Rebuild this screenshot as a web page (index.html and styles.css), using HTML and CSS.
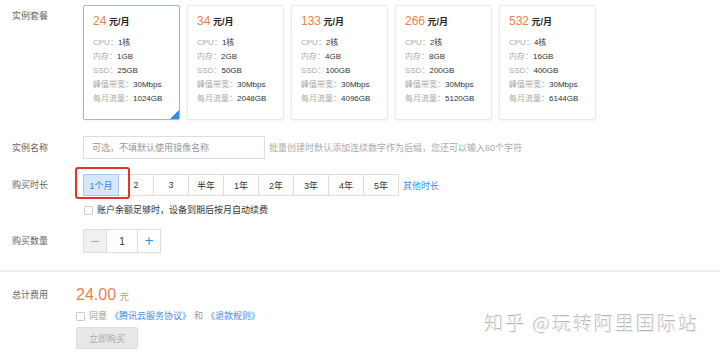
FILE: index.html
```html
<!DOCTYPE html>
<html lang="zh-CN">
  <head>
    <meta charset="UTF-8" />
    <meta name="viewport" content="width=device-width, initial-scale=1.0" />
    <title>实例购买</title>
    <link rel="stylesheet" href="styles.css">
  </head>
  <body>
    <div class="page">
      <div class="row row-plans">
        <div class="label">实例套餐</div>
        <div class="plans">
          <div class="plan plan-active">
            <p class="price"><span class="num">24</span> <b>元/月</b></p>
            <ul class="specs">
              <li><span>CPU：</span>1核</li>
              <li><span>内存：</span>1GB</li>
              <li><span>SSD：</span>25GB</li>
              <li><span>峰值带宽：</span>30Mbps</li>
              <li><span>每月流量：</span>1024GB</li>
            </ul>
          </div>
          <div class="plan">
            <p class="price"><span class="num">34</span> <b>元/月</b></p>
            <ul class="specs">
              <li><span>CPU：</span>1核</li>
              <li><span>内存：</span>2GB</li>
              <li><span>SSD：</span>50GB</li>
              <li><span>峰值带宽：</span>30Mbps</li>
              <li><span>每月流量：</span>2048GB</li>
            </ul>
          </div>
          <div class="plan">
            <p class="price"><span class="num">133</span> <b>元/月</b></p>
            <ul class="specs">
              <li><span>CPU：</span>2核</li>
              <li><span>内存：</span>4GB</li>
              <li><span>SSD：</span>100GB</li>
              <li><span>峰值带宽：</span>30Mbps</li>
              <li><span>每月流量：</span>4096GB</li>
            </ul>
          </div>
          <div class="plan">
            <p class="price"><span class="num">266</span> <b>元/月</b></p>
            <ul class="specs">
              <li><span>CPU：</span>2核</li>
              <li><span>内存：</span>8GB</li>
              <li><span>SSD：</span>200GB</li>
              <li><span>峰值带宽：</span>30Mbps</li>
              <li><span>每月流量：</span>5120GB</li>
            </ul>
          </div>
          <div class="plan">
            <p class="price"><span class="num">532</span> <b>元/月</b></p>
            <ul class="specs">
              <li><span>CPU：</span>4核</li>
              <li><span>内存：</span>16GB</li>
              <li><span>SSD：</span>400GB</li>
              <li><span>峰值带宽：</span>30Mbps</li>
              <li><span>每月流量：</span>6144GB</li>
            </ul>
          </div>
        </div>
      </div>

      <div class="row row-name">
        <div class="label">实例名称</div>
        <input type="text" class="name-input" placeholder="可选，不填默认使用镜像名称" />
        <span class="hint">批量创建时默认添加连续数字作为后缀，您还可以输入60个字符</span>
      </div>

      <div class="row row-period">
        <div class="label">购买时长</div>
        <div class="period-box">
          <div class="period-line">
            <div class="periods">
              <button type="button" class="period period-active">1个月</button>
              <button type="button" class="period">2</button>
              <button type="button" class="period">3</button>
              <button type="button" class="period">半年</button>
              <button type="button" class="period">1年</button>
              <button type="button" class="period">2年</button>
              <button type="button" class="period">3年</button>
              <button type="button" class="period">4年</button>
              <button type="button" class="period">5年</button>
              <span class="mark"></span>
            </div>
            <a class="other">其他时长</a>
          </div>
          <label class="renew">
            <input type="checkbox" class="check" />
            <span>账户余额足够时，设备到期后按月自动续费</span>
          </label>
        </div>
      </div>

      <div class="row row-qty">
        <div class="label">购买数量</div>
        <div class="qty">
          <button type="button" class="qty-btn qty-minus">−</button>
          <input type="text" class="qty-num" value="1" />
          <button type="button" class="qty-btn qty-plus">+</button>
        </div>
      </div>

      <div class="row total">
        <div class="label total-label">总计费用</div>
        <div class="total-body">
          <p class="total-price"><span class="amount">24.00</span><span class="unit">元</span></p>
          <label class="agree">
            <input type="checkbox" class="check" />
            <span>同意</span>
            <a>《腾讯云服务协议》</a>
            <span class="and">和</span>
            <a>《退款规则》</a>
          </label>
          <button type="button" class="buy" disabled>立即购买</button>
        </div>
      </div>

      <div class="watermark">知乎 @玩转阿里国际站</div>
    </div>
  </body>
</html>
```

FILE: styles.css
```css
body {
  margin: 0;
  background: #fff;
  font-family: "Liberation Sans", "Noto Sans CJK SC", sans-serif;
  font-size: 9px;
  color: #333;
}

.page {
  position: relative;
  padding-top: 5px;
  height: 347px;
}

.row {
  display: flex;
}

.label {
  flex: none;
  width: 83px;
  padding-left: 12px;
  box-sizing: border-box;
  color: #666;
  line-height: 20px;
}

/* plans */
.row-plans .label {
  padding-top: 1px;
}

.plans {
  display: flex;
  gap: 7px;
}

.plan {
  position: relative;
  width: 97px;
  height: 115px;
  box-sizing: border-box;
  padding: 6px 9px;
  border: 1px solid #e8e8e8;
  border-radius: 2px;
  box-shadow: 0 1px 3px rgba(0, 0, 0, 0.06);
}

.plan-active {
  border-color: #a3b6ca;
}

.plan-active::after {
  content: "";
  position: absolute;
  right: 0;
  bottom: 0;
  border-style: solid;
  border-width: 0 0 9px 9px;
  border-color: transparent transparent #2b8fe8 transparent;
}

.price {
  margin: 0;
  line-height: 18px;
}

.price .num {
  font-size: 12px;
  color: #e8834e;
}

.price b {
  font-size: 9px;
  color: #222;
}

.specs {
  list-style: none;
  margin: 5px 0 0;
  padding: 0;
  font-size: 8px;
  line-height: 14px;
  color: #333;
}

.specs span {
  color: #aaa;
}

/* name */
.row-name {
  margin-top: 16px;
  align-items: center;
}

.name-input {
  width: 182px;
  height: 23px;
  box-sizing: border-box;
  margin: 0;
  padding: 0 8px;
  border: 1px solid #ddd;
  font: inherit;
  color: #333;
}

.name-input::placeholder {
  color: #999;
}

.hint {
  margin-left: 4px;
  color: #aaa;
}

/* period */
.row-period {
  margin-top: 15px;
}

.row-period .label {
  line-height: 22px;
}

.period-line {
  display: flex;
  align-items: center;
}

.periods {
  position: relative;
  display: flex;
}

.period {
  width: 36px;
  height: 22px;
  margin: 0 0 0 -1px;
  padding: 0;
  border: 1px solid #ddd;
  background: #fff;
  font: inherit;
  color: #333;
}

.period:first-child {
  margin-left: 0;
}

.period-active {
  position: relative;
  z-index: 1;
  background: #d5e7f8;
  border-color: #a5c9ec;
  color: #3d87d4;
}

.mark {
  position: absolute;
  left: -8px;
  top: -7px;
  width: 55px;
  height: 32px;
  box-sizing: border-box;
  border: 2px solid #e8322f;
  border-radius: 3px;
  z-index: 2;
}

.other {
  margin-left: 4px;
  color: #3a8ee6;
}

.check {
  flex: none;
  appearance: none;
  width: 9px;
  height: 9px;
  margin: 0 4px 0 0;
  border: 1px solid #ccc;
  border-radius: 1px;
  background: #fff;
}

.renew {
  display: flex;
  align-items: center;
  margin-top: 8px;
  margin-left: 1px;
  line-height: 12px;
}

/* quantity */
.row-qty {
  margin-top: 13px;
  align-items: center;
}

.qty {
  display: flex;
  height: 24px;
  border: 1px solid #ddd;
  box-sizing: border-box;
}

.qty-btn {
  width: 23px;
  margin: 0;
  padding: 0;
  border: 0;
  background: #fff;
  font-family: "DejaVu Sans", sans-serif;
  font-size: 12px;
}

.qty-minus {
  background: #f0f0f0;
  color: #aaa;
  border-right: 1px solid #ddd;
}

.qty-plus {
  color: #2b8fe8;
  border-left: 1px solid #ddd;
}

.qty-num {
  width: 30px;
  margin: 0;
  padding: 0;
  border: 0;
  text-align: center;
  font: inherit;
  font-size: 10px;
  color: #333;
}

/* total */
.total {
  margin-top: 17px;
  padding-top: 13px;
  border-top: 2px solid #ececec;
}

.total-label {
  width: 76px;
}

.total-price {
  margin: 0;
  line-height: 20px;
  color: #e8834e;
}

.amount {
  font-size: 16px;
}

.unit {
  margin-left: 4px;
  font-size: 9px;
}

.agree {
  display: flex;
  align-items: center;
  margin-top: 3px;
  line-height: 12px;
  color: #999;
}

.agree a {
  margin-left: 3px;
  color: #3a8ee6;
}

.agree .and {
  margin-left: 3px;
}

.buy {
  display: block;
  width: 62px;
  height: 22px;
  margin-top: 5px;
  padding: 0;
  border: 1px solid #ddd;
  border-radius: 2px;
  background: #e8e8e8;
  font: inherit;
  color: #aaa;
}

.watermark {
  position: absolute;
  left: 485px;
  top: 309px;
  font-family: "Noto Sans CJK SC", sans-serif;
  font-size: 19px;
  font-weight: 300;
  letter-spacing: 2px;
  color: #ececec;
  text-shadow: -1px -1px 0 #b5b5b5, 1px 1px 0 #fff;
}
```
